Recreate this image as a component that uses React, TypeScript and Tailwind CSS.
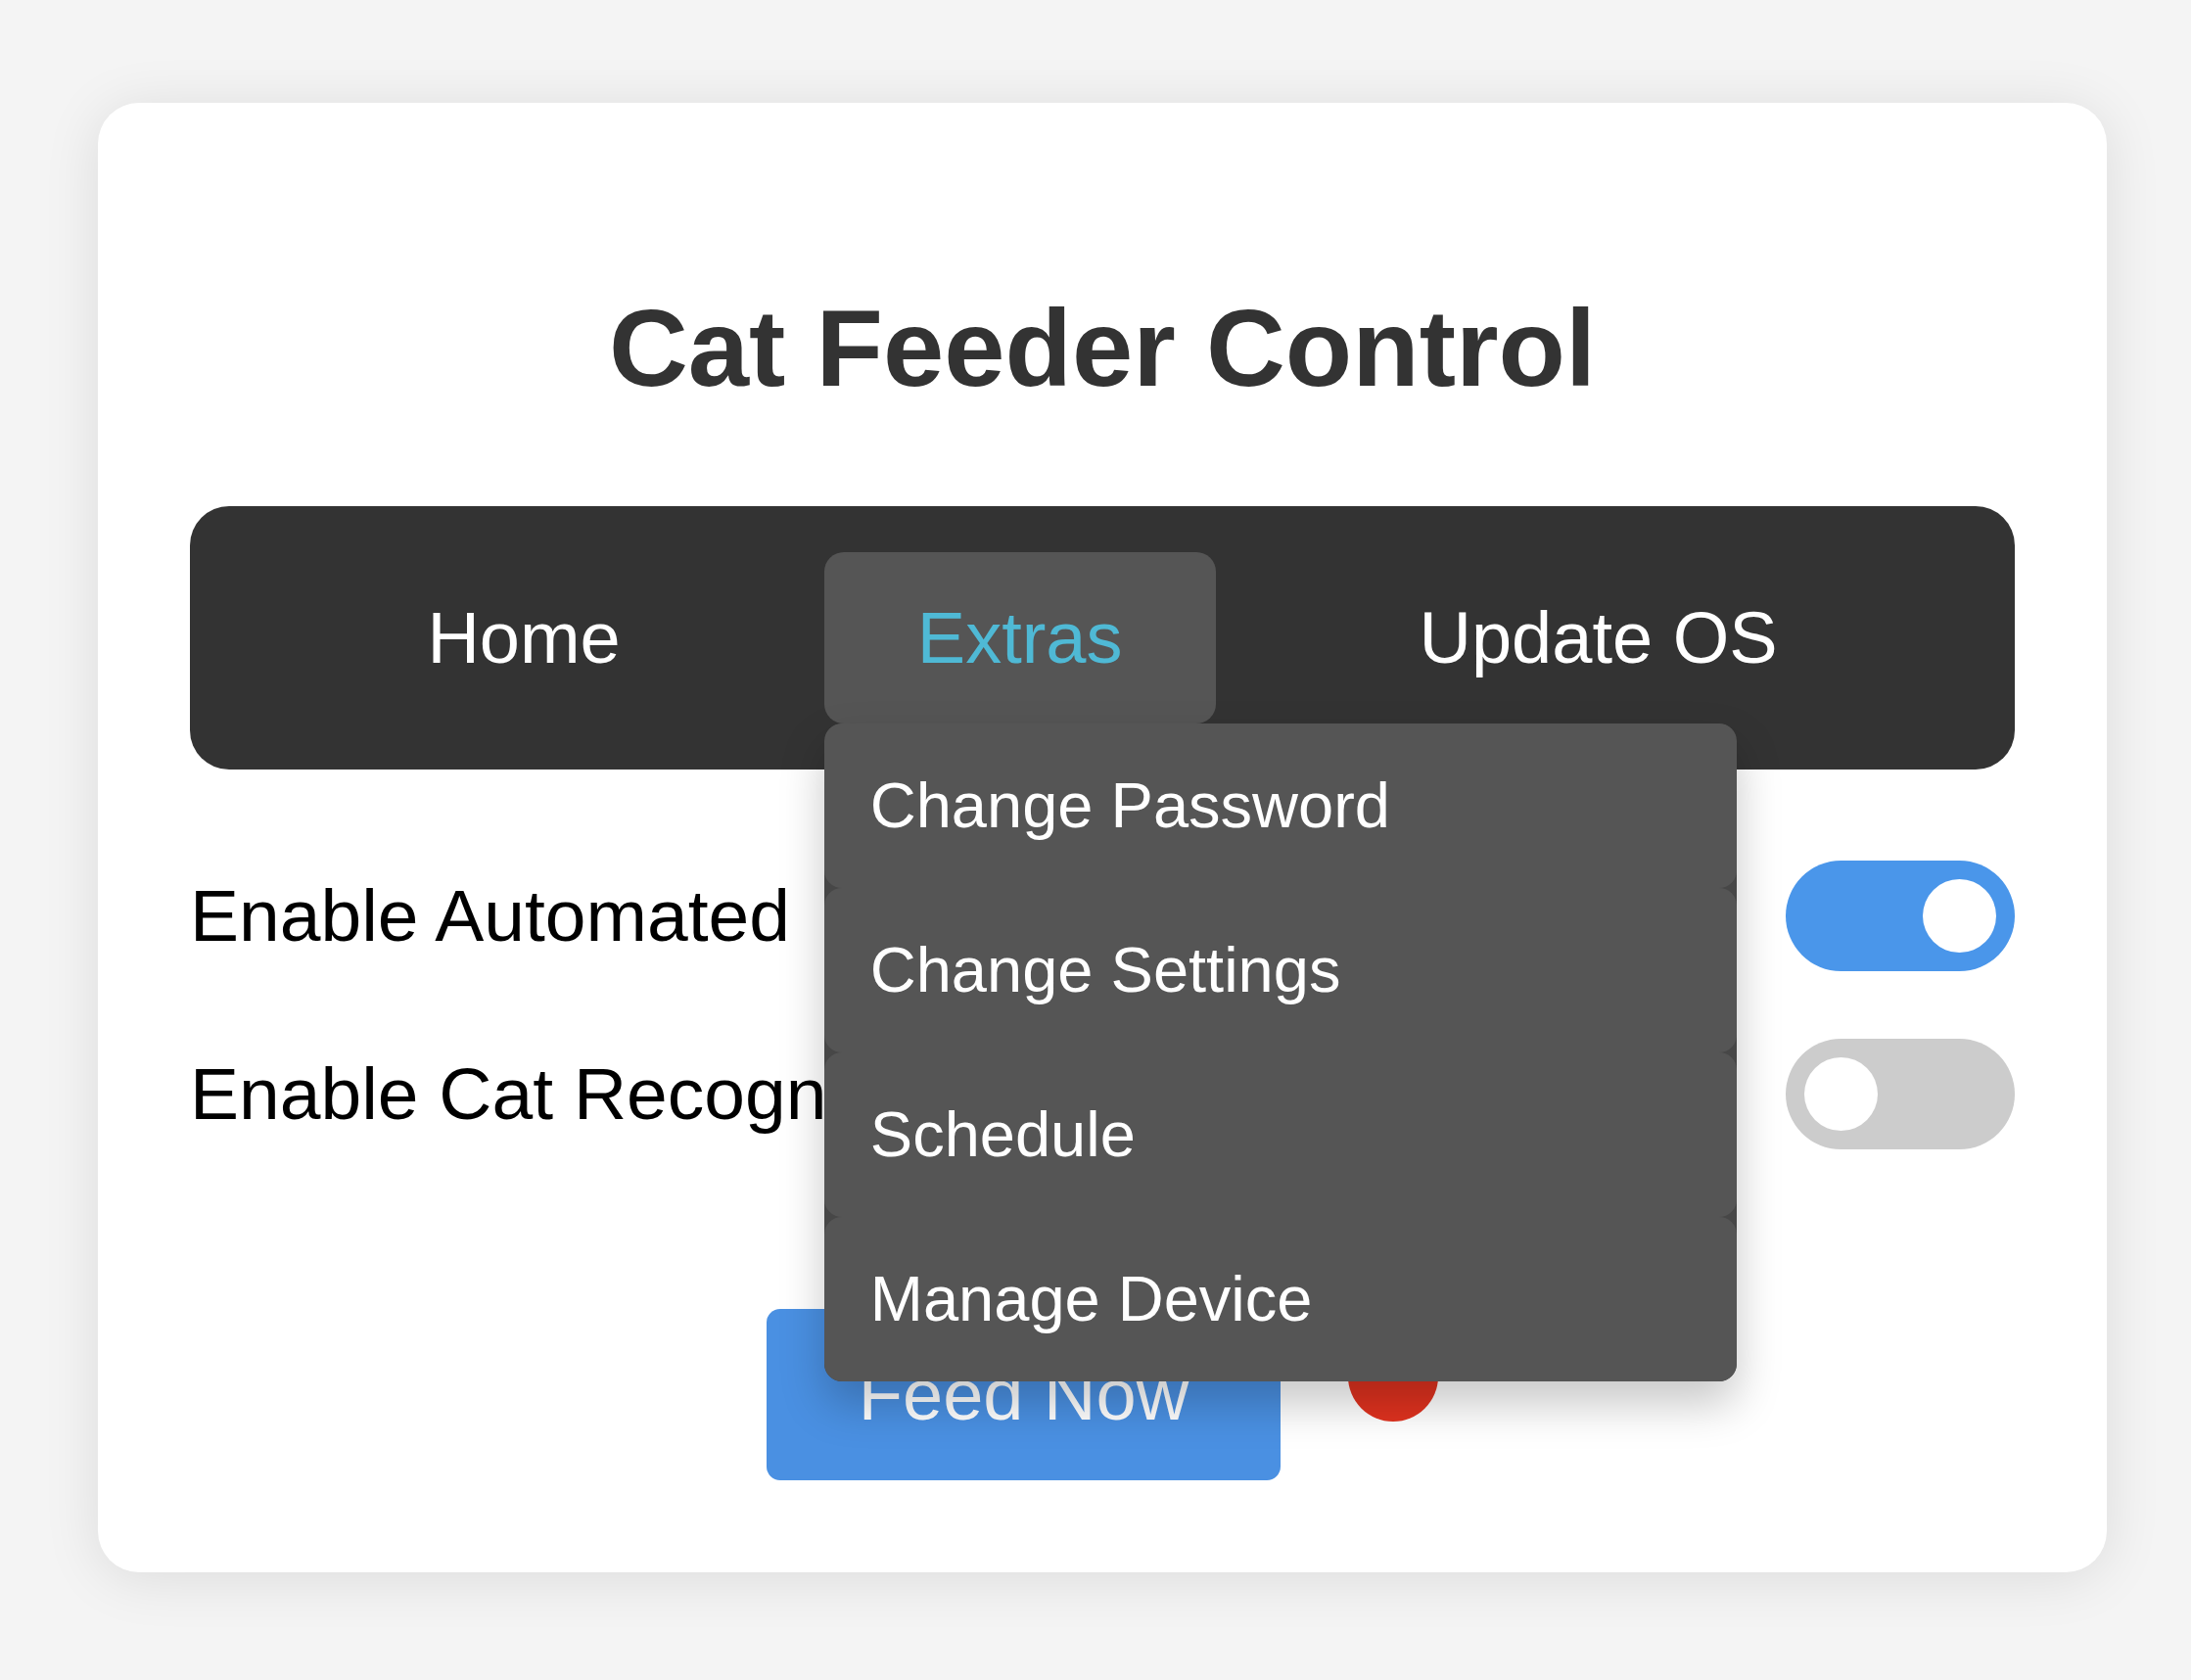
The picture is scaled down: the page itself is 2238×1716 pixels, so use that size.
import React from "react";

function Toggle({ on }: { on: boolean }) {
  return (
    <div
      className={
        on
          ? "w-[234px] h-[113px] rounded-full bg-[#4a96ea] flex items-center justify-end px-[19px] shrink-0"
          : "w-[234px] h-[113px] rounded-full bg-[#cccccc] flex items-center justify-start px-[19px] shrink-0"
      }
    >
      <div className="w-[75px] h-[75px] rounded-full bg-white" />
    </div>
  );
}

export default function App() {
  const items = ["Change Password", "Change Settings", "Schedule", "Manage Device"];
  return (
    <div className="min-h-screen bg-[#f4f4f4] pt-[105px] pl-[100px] pb-[110px] font-['Liberation_Sans',Arial,sans-serif]">
      <div className="w-[2052px] bg-white rounded-[42px] shadow-[0_6px_57px_rgba(0,0,0,0.1)] px-[94px] pt-[94px] pb-[94px]">
        <h1 className="text-center text-[112px] font-bold text-[#333333] leading-[1.15] mt-[93px] mb-[96px]">
          Cat Feeder Control
        </h1>
        <nav className="bg-[#333333] rounded-[40px] py-[47px] flex justify-center gap-[115px] text-[74px] leading-[1.15] text-white">
          <div className="px-[93px] py-[45px]">Home</div>
          <div className="relative z-10">
            <div className="px-[95px] py-[45px] bg-[#555555] rounded-[20px] text-[#4fb9d5]">Extras</div>
            <div className="absolute left-0 top-full w-[932px] bg-[#474747] rounded-[18px] overflow-hidden shadow-[0_23px_46px_rgba(0,0,0,0.22)] flex flex-col">
              {items.map((t) => (
                <div
                  key={t}
                  className="bg-[#555555] rounded-[18px] pl-[47px] py-[47px] text-[65px] leading-[74px] text-white whitespace-nowrap"
                >
                  {t}
                </div>
              ))}
            </div>
          </div>
          <div className="px-[93px] py-[45px]">Update OS</div>
        </nav>
        <div className="mt-[93px] flex flex-col gap-[69px] text-[75px] leading-[1.15] text-black">
          <div className="flex items-center justify-between">
            <span>Enable Automated</span>
            <Toggle on={true} />
          </div>
          <div className="flex items-center justify-between">
            <span>Enable Cat Recognition</span>
            <Toggle on={false} />
          </div>
        </div>
        <div className="mt-[163px] flex justify-center items-start gap-[69px]">
          <button className="bg-[#4a90e2] text-white text-[74px] leading-[1.15] px-[94px] py-[45px] rounded-[14px]">
            Feed Now
          </button>
          <div className="mt-[23px] w-[92px] h-[92px] rounded-full bg-[#e0321f]" />
        </div>
      </div>
    </div>
  );
}
